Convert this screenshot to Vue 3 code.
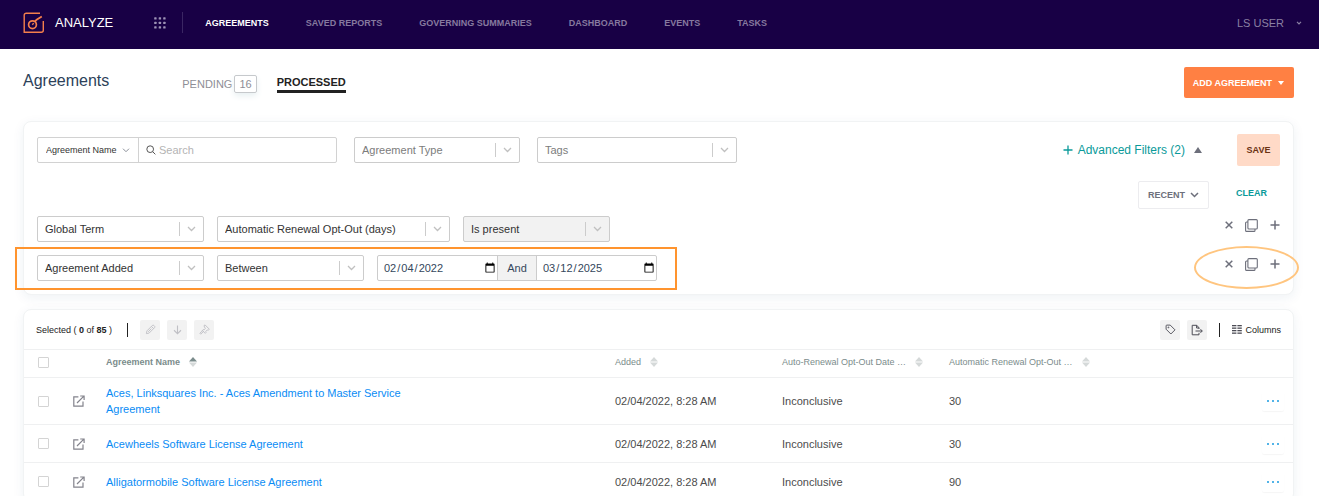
<script setup>
import { ref } from 'vue'

const nav = ['AGREEMENTS', 'SAVED REPORTS', 'GOVERNING SUMMARIES', 'DASHBOARD', 'EVENTS', 'TASKS']

const filterRows = [
  {
    selects: [
      { label: 'Filter category', value: 'Global Term', size: 'w-field' },
      { label: 'Term', value: 'Automatic Renewal Opt-Out (days)', size: 'w-term' },
      { label: 'Condition', value: 'Is present', size: 'w-state', disabled: true },
    ],
  },
  {
    marked: true,
    dates: true,
    selects: [
      { label: 'Filter category', value: 'Agreement Added', size: 'w-field' },
      { label: 'Condition', value: 'Between', size: 'w-state' },
    ],
  },
]

const from = ref('2022-02-04')
const to = ref('2025-03-12')

const columns = ['Agreement Name', 'Added', 'Auto-Renewal Opt-Out Date …', 'Automatic Renewal Opt-Out …']

const rows = [
  { name: 'Aces, Linksquares Inc. - Aces Amendment to Master Service Agreement', added: '02/04/2022, 8:28 AM', date: 'Inconclusive', days: 30 },
  { name: 'Acewheels Software License Agreement', added: '02/04/2022, 8:28 AM', date: 'Inconclusive', days: 30 },
  { name: 'Alligatormobile Software License Agreement', added: '02/04/2022, 8:28 AM', date: 'Inconclusive', days: 90 },
]
</script>

<template>
  <div class="page">
    <header class="topbar">
      <a class="brand" href="#">
        <svg width="22" height="22" viewBox="0 0 22 22" fill="none" stroke="#f47f4c" stroke-width="1.4">
          <path d="M17 1.2H3.2a2 2 0 0 0-2 2v17.1h17.1a2 2 0 0 0 2-2V9" />
          <circle cx="9.5" cy="12.7" r="3.9" stroke-width="1.7" />
          <path d="M11.9 9.7l1.7-2 5.2-3.2" stroke-width="1.8" />
          <path d="M9.3 12.7l1.4-1.6" />
        </svg>
        <span>ANALYZE</span>
      </a>
      <button class="apps" aria-label="Apps">
        <svg width="12" height="12" viewBox="0 0 12 12" fill="#9d92b5">
          <template v-for="y in 3" :key="y">
            <rect v-for="x in 3" :key="x" :x="x * 4.5 - 4.3" :y="y * 4.5 - 4.3" width="2.4" height="2.4" rx="0.6" />
          </template>
        </svg>
      </button>
      <nav>
        <a v-for="(item, i) in nav" :key="item" href="#" :class="{ active: i === 0 }">{{ item }}</a>
      </nav>
      <button class="user">
        <span>LS USER</span>
        <svg width="6" height="4" viewBox="0 0 6 4" fill="none" stroke="#8b80a3" stroke-width="1.2"><path d="M1 .8l2 2 2-2" /></svg>
      </button>
    </header>

    <main>
      <div class="heading">
        <h1>Agreements</h1>
        <div class="tabs">
          <a href="#" class="pending">PENDING <span class="badge">16</span></a>
          <a href="#" class="processed">PROCESSED</a>
        </div>
        <button class="add">
          <span>ADD AGREEMENT</span>
          <svg width="6" height="4" viewBox="0 0 6 4" fill="#fff"><path d="M0 0h6L3 4z" /></svg>
        </button>
      </div>

      <section class="card filters">
        <div class="search-row">
          <div class="search">
            <div class="by">
              <select aria-label="Search by"><option>Agreement Name</option></select>
              <svg width="8" height="5" viewBox="0 0 8 5" fill="none" stroke="#8a8f98"><path d="M1 .7l3 3 3-3" /></svg>
            </div>
            <label class="query">
              <svg width="10" height="10" viewBox="0 0 11 11" fill="none" stroke="#555" stroke-width="1.1">
                <circle cx="4.6" cy="4.6" r="3.7" /><path d="M7.3 7.3l3 3" />
              </svg>
              <input type="text" placeholder="Search" aria-label="Search" />
            </label>
          </div>
          <div class="select w-type hint">
            <select aria-label="Agreement Type"><option>Agreement Type</option></select>
            <i></i>
            <svg width="9" height="6" viewBox="0 0 9 6"><path d="M1 1l3.5 3.5L8 1" /></svg>
          </div>
          <div class="select w-tags hint">
            <select aria-label="Tags"><option>Tags</option></select>
            <i></i>
            <svg width="9" height="6" viewBox="0 0 9 6"><path d="M1 1l3.5 3.5L8 1" /></svg>
          </div>
          <button class="advanced">
            <svg width="10" height="10" viewBox="0 0 10 10" stroke="#0a9a9a" stroke-width="1.3"><path d="M5 .5v9M.5 5h9" /></svg>
            <span>Advanced Filters (2)</span>
            <svg width="8" height="6" viewBox="0 0 8 6" fill="#6d6f7b"><path d="M0 6h8L4 0z" /></svg>
          </button>
          <button class="save">SAVE</button>
        </div>

        <div class="recent-row">
          <button class="recent">
            <span>RECENT</span>
            <svg width="9" height="6" viewBox="0 0 9 6" fill="none" stroke="#6d6f7b" stroke-width="1.5"><path d="M1 1l3.5 3.5L8 1" /></svg>
          </button>
          <button class="clear">CLEAR</button>
        </div>

        <div v-for="(row, r) in filterRows" :key="r" class="filter-row">
          <div v-if="row.marked" class="mark-box"></div>
          <div v-for="s in row.selects" :key="s.value" class="select" :class="[s.size, { off: s.disabled }]">
            <select :aria-label="s.label" :disabled="s.disabled"><option>{{ s.value }}</option></select>
            <i></i>
            <svg width="9" height="6" viewBox="0 0 9 6"><path d="M1 1l3.5 3.5L8 1" /></svg>
          </div>
          <div v-if="row.dates" class="dates">
            <input v-model="from" type="date" aria-label="From date" />
            <span>And</span>
            <input v-model="to" type="date" aria-label="To date" />
          </div>
          <div class="row-actions">
            <button aria-label="Remove filter">
              <svg width="8" height="8" viewBox="0 0 8 8" stroke="#6d6f7b" stroke-width="1.5"><path d="M.7.7l6.6 6.6M7.3.7L.7 7.3" /></svg>
            </button>
            <button aria-label="Duplicate filter">
              <svg width="13" height="13" viewBox="0 0 13 13" fill="none" stroke="#6d6f7b" stroke-width="1.1">
                <rect x="2.9" y=".6" width="9.4" height="9.4" rx="1" />
                <path d="M2.9 3H1.6a1 1 0 0 0-1 1v7.4a1 1 0 0 0 1 1H9a1 1 0 0 0 1-1V10" />
              </svg>
            </button>
            <button aria-label="Add filter">
              <svg width="10" height="10" viewBox="0 0 10 10" stroke="#6d6f7b" stroke-width="1.5"><path d="M5 .5v9M.5 5h9" /></svg>
            </button>
            <div v-if="row.marked" class="mark-ring"></div>
          </div>
        </div>
      </section>

      <section class="card results">
        <div class="toolbar">
          <p>Selected ( <b>0</b> of <b>85</b> )</p>
          <span class="bar"></span>
          <div class="tools">
            <button class="tool" aria-label="Edit" disabled>
              <svg width="11" height="11" viewBox="0 0 12 12" fill="none" stroke="#c0c0c5"><path d="M1.5 10.5l.6-3L8 1.6a1.2 1.2 0 0 1 1.7 0l.7.7a1.2 1.2 0 0 1 0 1.7L4.5 9.9zM7 2.6L9.4 5M3.4 8.6L7 5" /></svg>
            </button>
            <button class="tool" aria-label="Download" disabled>
              <svg width="11" height="11" viewBox="0 0 12 12" fill="none" stroke="#c0c0c5" stroke-width="1.2"><path d="M6 1.5v9M2.2 6.8L6 10.5l3.8-3.7" /></svg>
            </button>
            <button class="tool" aria-label="Apply" disabled>
              <svg width="11" height="11" viewBox="0 0 12 12" fill="none" stroke="#c0c0c5">
                <path d="M5.4 1.6l1.2-.9 4.6 4.6-.9 1.2-1.3-.3-1.6 1.6.3 1.2-.9.9-3.2-3.2.9-.9 1.2.2 1.2-1.2z" transform="translate(0 .3)" />
                <path d="M4.4 6.7L.9 10.1l1 1 3.5-3.4" />
              </svg>
            </button>
          </div>
          <div class="tools right">
            <button class="tool" aria-label="Tag">
              <svg width="11" height="11" viewBox="0 0 12 12" fill="none" stroke="#4c4c55"><path d="M1.2 2a.8.8 0 0 1 .8-.8h3.7l5.2 5.2-4.5 4.5-5.2-5.2z" /><circle cx="3.7" cy="3.7" r=".5" /></svg>
            </button>
            <button class="tool" aria-label="Export">
              <svg width="12" height="12" viewBox="0 0 12 12" fill="none" stroke="#4c4c55"><path d="M8 5V3.8L5.8 1.3H1.2v9.5H8V8.8M5.6 1.4V4H8M4.5 7h6.6M9.5 5.2L11.3 7 9.5 8.8" /></svg>
            </button>
          </div>
          <span class="bar"></span>
          <button class="columns">
            <svg width="10" height="9" viewBox="0 0 10 9" fill="#4c4c55">
              <template v-for="y in 4" :key="y">
                <rect x="0" :y="y * 2.5 - 2.5" width="4.4" height="1.3" />
                <rect x="5.4" :y="y * 2.5 - 2.5" width="4.4" height="1.3" />
              </template>
            </svg>
            <span>Columns</span>
          </button>
        </div>

        <table>
          <colgroup>
            <col class="c-check" /><col class="c-open" /><col /><col class="c-data" /><col class="c-data" /><col class="c-days" /><col class="c-more" />
          </colgroup>
          <thead>
            <tr>
              <th class="check"><input type="checkbox" aria-label="Select all" /></th>
              <th></th>
              <th v-for="(c, i) in columns" :key="c" :class="{ sorted: i === 0 }">
                <span class="th">
                  {{ c }}
                  <svg width="8" height="10" viewBox="0 0 8 10" fill="#d5d9d9"><path class="up" d="M0 4.5L4 0l4 4.5z" /><path d="M0 5.5h8L4 10z" /></svg>
                </span>
              </th>
              <th></th>
            </tr>
          </thead>
          <tbody>
            <tr v-for="row in rows" :key="row.name">
              <td class="check"><input type="checkbox" :aria-label="'Select ' + row.name" /></td>
              <td>
                <a href="#" class="open" :aria-label="'Open ' + row.name">
                  <svg width="12" height="12" viewBox="0 0 12 12" fill="none" stroke="#83838c" stroke-width="1.2"><path d="M5.4 1.8H.8v9.4h9.2V6.4M4 8l6.4-6.4M7.2 1h3.9v3.9" /></svg>
                </a>
              </td>
              <td><a href="#" class="name">{{ row.name }}</a></td>
              <td>{{ row.added }}</td>
              <td>{{ row.date }}</td>
              <td>{{ row.days }}</td>
              <td>
                <button class="more" aria-label="More actions">
                  <svg width="12" height="2" viewBox="0 0 12 2" fill="#1a9be0"><circle cx="1" cy="1" r="1" /><circle cx="6" cy="1" r="1" /><circle cx="11" cy="1" r="1" /></svg>
                </button>
              </td>
            </tr>
          </tbody>
        </table>
      </section>
    </main>
  </div>
</template>

<style>
body {
  margin: 0;
  background: #fff;
}
</style>

<style scoped>
.page {
  height: 100vh;
  overflow: hidden;
  font-family: "Liberation Sans", Arial, sans-serif;
  font-size: 11px;
  color: #4c4c4c;
}
.page * {
  box-sizing: border-box;
}
a {
  text-decoration: none;
}
button {
  display: flex;
  align-items: center;
  justify-content: center;
  padding: 0;
  border: 0;
  background: none;
  font: inherit;
  color: inherit;
  cursor: pointer;
}
svg {
  display: block;
  flex: none;
}

.topbar {
  display: flex;
  align-items: center;
  height: 49px;
  padding: 0 17px 4px 23px;
  background: #180045;
}
.brand {
  display: flex;
  align-items: center;
  gap: 10px;
  font-size: 13px;
  color: #fff;
}
.apps {
  margin-left: 41px;
}
nav {
  display: flex;
  align-items: center;
  gap: 37px;
  height: 21px;
  margin-left: 16px;
  padding-left: 22px;
  border-left: 1px solid #3a2663;
  font-size: 9px;
  font-weight: bold;
}
nav a {
  color: #86799f;
}
nav .active {
  color: #fff;
}
.user {
  gap: 12px;
  margin-left: auto;
  color: #8b80a3;
}

main {
  padding: 0 25px 0 23px;
}
.heading {
  display: flex;
  align-items: center;
  height: 72px;
  padding-bottom: 5px;
}
h1 {
  margin: 0 0 4px;
  font-size: 16px;
  font-weight: normal;
  color: #2c4159;
}
.tabs {
  display: flex;
  align-items: center;
  gap: 20px;
  margin: 2px 0 0 73px;
}
.pending {
  display: flex;
  align-items: center;
  gap: 2px;
  color: #8e8e96;
}
.badge {
  padding: 1px 4px;
  border: 1px solid #c6c9cc;
  border-radius: 2px;
  line-height: 14px;
  box-shadow: 0 3px 6px #e8f0f2;
}
.processed {
  border-bottom: 3px solid #222;
  line-height: 15px;
  font-weight: bold;
  color: #222;
}
.add {
  gap: 6px;
  height: 31px;
  margin-left: auto;
  padding: 0 10px 0 9px;
  border-radius: 2px;
  background: #ff8043;
  font-size: 9px;
  font-weight: bold;
  color: #fff;
}

.card {
  border: 1px solid #f1f3f4;
  border-radius: 8px;
  background: #fff;
  box-shadow: 0 3px 12px rgba(30, 70, 110, 0.07);
}
.filters {
  padding: 12px 13px 13px;
}
.search-row {
  display: flex;
  align-items: center;
  gap: 17px;
  height: 32px;
}
.search {
  display: flex;
  width: 300px;
  height: 26px;
  border: 1px solid #d2d2d2;
  border-radius: 2px;
}
.by {
  display: flex;
  align-items: center;
  width: 101px;
  padding: 0 8px;
  border-right: 1px solid #d2d2d2;
  font-size: 9px;
}
select {
  flex: 1;
  min-width: 0;
  height: 100%;
  padding: 0;
  border: 0;
  outline: 0;
  appearance: none;
  background: none;
  font: inherit;
  color: #333;
  opacity: 1;
}
.query {
  display: flex;
  flex: 1;
  align-items: center;
  gap: 3px;
  padding-left: 7px;
}
.query input {
  flex: 1;
  min-width: 0;
  padding: 0;
  border: 0;
  outline: 0;
  font: inherit;
}
.query input::placeholder {
  color: #b4b4b4;
}
.select {
  display: flex;
  align-items: center;
  height: 26px;
  padding: 0 7px;
  border: 1px solid #ccc;
  border-radius: 2px;
}
.select i {
  width: 1px;
  height: 14px;
  margin-right: 7px;
  background: #ccc;
}
.select svg {
  fill: none;
  stroke: #c0c0c0;
  stroke-width: 1.3;
}
.hint select {
  color: #7c7c7c;
}
.off {
  background: #f2f2f2;
}
.w-type {
  width: 166px;
}
.w-tags {
  width: 200px;
}
.w-field {
  width: 167px;
}
.w-term {
  width: 233px;
}
.w-state {
  width: 147px;
}
.advanced {
  gap: 5px;
  margin-left: auto;
  font-size: 12px;
  color: #0a9a9a;
}
.advanced span {
  margin-right: 4px;
}
.save {
  width: 43px;
  height: 32px;
  margin-left: 18px;
  border-radius: 2px;
  background: #ffdac7;
  font-size: 9px;
  font-weight: bold;
  color: #6b3213;
}
.recent-row {
  display: flex;
  gap: 27px;
  height: 28px;
  margin-top: 15px;
  padding-right: 13px;
  justify-content: flex-end;
  font-size: 9px;
  font-weight: bold;
}
.recent {
  gap: 5px;
  padding: 0 9px;
  border: 1px solid #ececef;
  border-radius: 2px;
  color: #6d6f7b;
}
.clear {
  height: 23px;
  color: #0a9a9a;
}
.filter-row {
  position: relative;
  display: flex;
  gap: 13px;
  margin-top: 13px;
}
.recent-row + .filter-row {
  margin-top: 7px;
}
.dates {
  display: flex;
  height: 26px;
  border: 1px solid #ccc;
  border-radius: 2px;
  color: #34475c;
}
.dates input {
  width: 119px;
  padding: 0 1px 0 5px;
  border: 0;
  outline: 0;
  background: none;
  font: inherit;
  color: inherit;
}
.dates input::-webkit-calendar-picker-indicator {
  width: 12px;
  height: 12px;
  padding: 0;
}
.dates span {
  width: 40px;
  border: solid #ccc;
  border-width: 0 1px;
  background: #f2f2f2;
  line-height: 24px;
  text-align: center;
}
.row-actions {
  position: relative;
  display: flex;
  gap: 12px;
  height: 18px;
  margin-left: auto;
}
.mark-box {
  position: absolute;
  top: -8px;
  left: -22px;
  width: 662px;
  height: 43px;
  border: 2px solid #ff942e;
  pointer-events: none;
}
.mark-ring {
  position: absolute;
  top: -9px;
  right: -19px;
  width: 105px;
  height: 43px;
  border: 2px solid #ffc57f;
  border-radius: 50%;
  pointer-events: none;
}

.results {
  margin-top: 14px;
}
.toolbar {
  display: flex;
  align-items: center;
  height: 39px;
  padding: 0 12px;
  font-size: 9px;
  color: #222;
}
.toolbar p {
  margin: 0 3px 0 0;
}
.toolbar .bar {
  width: 1px;
  height: 14px;
  margin: 0 12px;
  background: #222;
}
.tools {
  display: flex;
  gap: 7px;
}
.tools.right {
  margin-left: auto;
}
.tool {
  width: 20px;
  height: 20px;
  border-radius: 2px;
  background: #f2f2f2;
}
.columns {
  gap: 3px;
}

table {
  width: 100%;
  table-layout: fixed;
  border-collapse: collapse;
}
.c-check {
  width: 49px;
}
.c-open {
  width: 33px;
}
.c-data {
  width: 167px;
}
.c-days {
  width: 313px;
}
.c-more {
  width: 31px;
}
th,
td {
  padding: 0;
  border-top: 1px solid #eff0f1;
  text-align: left;
  line-height: 16px;
}
th {
  height: 28px;
  font-size: 9px;
  font-weight: normal;
  color: #7b8c8c;
  padding-bottom: 3px;
}
.sorted {
  font-weight: bold;
}
.sorted .up {
  fill: #7b8c8c;
}
.th {
  display: flex;
  align-items: center;
  gap: 9px;
  white-space: nowrap;
}
td {
  height: 38px;
  padding: 7px 0;
}
.check {
  padding-left: 14px;
}
.check input {
  display: block;
  width: 11px;
  height: 11px;
  margin: 0;
  border: 1px solid #d4d4d4;
  border-radius: 1px;
  appearance: none;
}
.name {
  display: block;
  max-width: 320px;
  color: #0a8cf5;
}
.more {
  width: 22px;
  height: 20px;
  border-radius: 2px;
  box-shadow: 0 1px 1px #f6f6f6;
}
</style>
